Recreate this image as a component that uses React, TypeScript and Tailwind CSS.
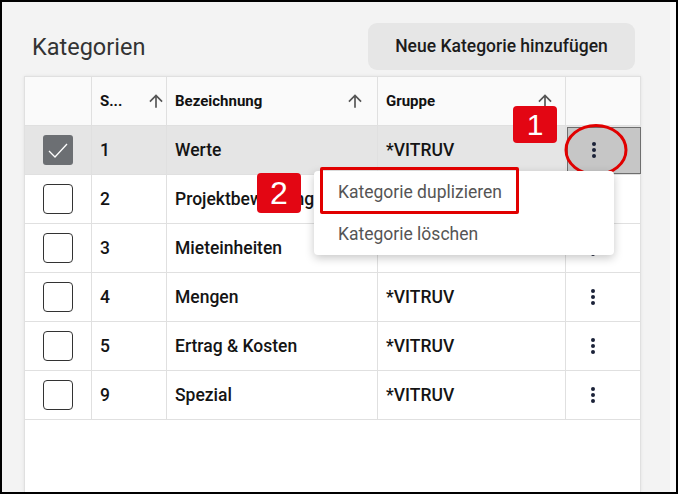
import { useState } from 'react'

type Row = { id: number; name: string; group: string }

const ROWS: Row[] = [
  { id: 1, name: 'Werte', group: '*VITRUV' },
  { id: 2, name: 'Projektbewertung', group: '*VITRUV' },
  { id: 3, name: 'Mieteinheiten', group: '*VITRUV' },
  { id: 4, name: 'Mengen', group: '*VITRUV' },
  { id: 5, name: 'Ertrag & Kosten', group: '*VITRUV' },
  { id: 9, name: 'Spezial', group: '*VITRUV' },
]

const COLS = 'grid grid-cols-[67px_75px_211px_188px_1fr]'

function ArrowUp() {
  return (
    <svg width="20" height="20" viewBox="0 0 24 24" className="shrink-0 fill-[#555]">
      <path d="M4 12l1.41 1.41L11 7.83V20h2V7.83l5.58 5.59L20 12l-8-8-8 8z" />
    </svg>
  )
}

function Dots() {
  return (
    <svg width="6" height="18" viewBox="0 0 6 18" className="fill-[#1b2238]">
      <circle cx="3" cy="3" r="2" />
      <circle cx="3" cy="9" r="2" />
      <circle cx="3" cy="15" r="2" />
    </svg>
  )
}

function Checkbox({ checked }: { checked: boolean }) {
  if (checked) {
    return (
      <div className="w-[30px] h-[30px] rounded-[3px] bg-[#6c6f73] flex items-center justify-center">
        <svg width="30" height="30" viewBox="0 0 30 30" fill="none">
          <polyline points="6,16 12,22 24,9" stroke="#fff" strokeWidth="1.3" />
        </svg>
      </div>
    )
  }
  return <div className="w-[30px] h-[30px] rounded-[4px] border border-[#333] bg-white" />
}

export default function App() {
  const [selected] = useState(1)

  return (
    <div className="w-[678px] h-[494px] border-2 border-black bg-[#f3f3f3] relative overflow-hidden flex font-['Roboto',sans-serif]">
      <div className="flex-1 flex flex-col pl-[22px]">
        {/* Header */}
        <div className="w-[617px] h-[74px] flex justify-between items-start shrink-0">
          <h1 className="mt-[31px] ml-[8px] text-[23.5px] leading-[28px] font-normal text-[#333]">Kategorien</h1>
          <button className="mt-[21px] mr-[6px] w-[267px] h-[47px] rounded-[9px] bg-[#e6e6e6] text-[17.5px] font-medium text-[#1c1c1c]">
            Neue Kategorie hinzufügen
          </button>
        </div>

        {/* Table */}
        <div className="w-[617px] flex-1 bg-white border-x border-t border-[#e0e0e0] shadow-[0_0_3px_rgba(0,0,0,0.08)]">
          <div className={`${COLS} h-[49px] bg-[#fafafa] border-b border-[#e0e0e0] text-[15px] font-bold text-[#111]`}>
            <div className="border-r border-[#e0e0e0]" />
            <div className="border-r border-[#e0e0e0] flex items-center justify-between pl-2 pr-0">
              <span>S...</span>
              <ArrowUp />
            </div>
            <div className="border-r border-[#e0e0e0] flex items-center justify-between pl-2 pr-[12px]">
              <span>Bezeichnung</span>
              <ArrowUp />
            </div>
            <div className="border-r border-[#e0e0e0] flex items-center justify-between pl-2 pr-[10px]">
              <span>Gruppe</span>
              <ArrowUp />
            </div>
            <div />
          </div>

          {ROWS.map((r) => {
            const isSel = r.id === selected
            return (
              <div
                key={r.id}
                className={`${COLS} h-[49px] border-b border-[#e0e0e0] text-[17.5px] font-medium text-[#141414] ${isSel ? 'bg-[#e5e5e5]' : 'bg-white'}`}
              >
                <div className="border-r border-[#e0e0e0] flex items-center justify-center">
                  <Checkbox checked={isSel} />
                </div>
                <div className="border-r border-[#e0e0e0] flex items-center pl-2">{r.id}</div>
                <div className="border-r border-[#e0e0e0] flex items-center pl-2 whitespace-nowrap">{r.name}</div>
                <div className="border-r border-[#e0e0e0] flex items-center pl-2">{r.group}</div>
                <div className="flex items-center">
                  {isSel ? (
                    <div className="ml-px w-[74px] h-[47px] bg-[#c6c6c6] border border-[#6e6e6e] flex items-center pl-[23px]">
                      <Dots />
                    </div>
                  ) : (
                    <div className="pl-[24px] flex items-center">
                      <Dots />
                    </div>
                  )}
                </div>
              </div>
            )
          })}
        </div>
      </div>
      <div className="w-[6px] bg-[#fbfbfb] shrink-0" />

      {/* Overlays: context menu and annotations */}
      <svg className="absolute left-[561px] top-[120px]" width="66" height="56" viewBox="0 0 66 56" fill="none">
        <ellipse cx="33" cy="28" rx="30" ry="24.5" stroke="#e10000" strokeWidth="3" />
      </svg>

      <div className="absolute left-[312px] top-[169px] w-[300px] h-[84px] bg-white rounded-[4px] shadow-[0_3px_10px_rgba(0,0,0,0.22)] text-[17.5px] text-[#555] flex flex-col">
        <div className="h-[42px] flex items-center pl-[24px]">Kategorie duplizieren</div>
        <div className="h-[42px] flex items-center pl-[24px]">Kategorie löschen</div>
      </div>
      <div className="absolute left-[318px] top-[165px] w-[199px] h-[47px] border-[3px] border-[#e10000] rounded-[2px]" />

      <div className="absolute left-[511px] top-[104px] w-[44px] h-[37px] rounded-[4px] bg-[#e30613] text-white text-[30px] leading-none flex items-center justify-center font-['Liberation_Sans',sans-serif]">
        1
      </div>
      <div className="absolute left-[255px] top-[171px] w-[44px] h-[40px] rounded-[4px] bg-[#e30613] text-white text-[32px] leading-none flex items-center justify-center font-['Liberation_Sans',sans-serif]">
        2
      </div>
    </div>
  )
}
